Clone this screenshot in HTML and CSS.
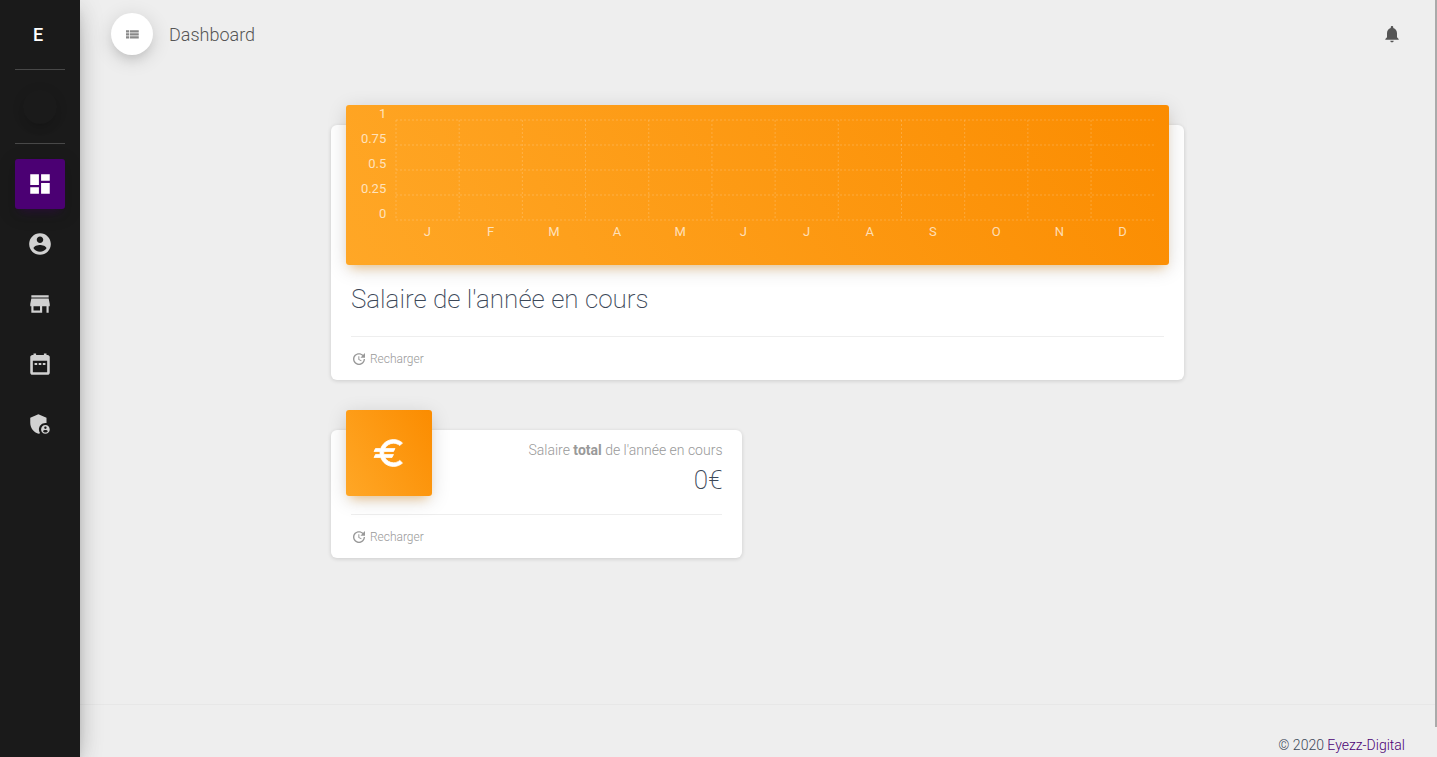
FILE: index.html
```html
<!DOCTYPE html>
<html lang="fr">
<head>
    <meta charset="UTF-8">
    <title>Dashboard</title>
    <link rel="stylesheet" href="styles.css">
</head>
<body>
    <div class="wrapper">
        <aside class="sidebar">
            <a class="logo" href="#">E</a>
            <div class="user"><div class="photo"></div></div>
            <nav class="menu">
                <a class="active" href="#" aria-label="Dashboard">
                    <svg viewBox="0 0 24 24"><path d="M3 13h8V3H3v10zm0 8h8v-6H3v6zm10 0h8V11h-8v10zm0-18v6h8V3h-8z"/></svg>
                </a>
                <a href="#" aria-label="Profil">
                    <svg viewBox="0 0 24 24"><path d="M12 2C6.48 2 2 6.48 2 12s4.48 10 10 10 10-4.48 10-10S17.52 2 12 2zm0 3c1.66 0 3 1.34 3 3s-1.34 3-3 3-3-1.34-3-3 1.34-3 3-3zm0 14.2c-2.5 0-4.71-1.28-6-3.22.03-1.99 4-3.08 6-3.08 1.99 0 5.97 1.09 6 3.08-1.29 1.94-3.5 3.22-6 3.22z"/></svg>
                </a>
                <a href="#" aria-label="Magasins">
                    <svg viewBox="0 0 24 24"><path d="M20 4H4v2h16V4zm1 10v-2l-1-5H4l-1 5v2h1v6h10v-6h4v6h2v-6h1zm-9 4H6v-4h6v4z"/></svg>
                </a>
                <a href="#" aria-label="Calendrier">
                    <svg viewBox="0 0 24 24"><path d="M9.4 11H7v2h2.4v-2zm3.8 0h-2.4v2h2.4v-2zm3.8 0h-2.4v2H17v-2zm2-7.4h-1V2.2h-2.4v1.4H8.4V2.2H6v1.4H5c-1.1 0-2 .9-2 2V20c0 1.1.9 2 2 2h14c1.1 0 2-.9 2-2V5.600c0-1.100-.9-2-2-2zm-.4 16H5.400V9h13.200v10.600z"/></svg>
                </a>
                <a href="#" aria-label="Administration">
                    <svg viewBox="0 0 24 24"><path d="M17 11c.34 0 .67.04 1 .09V6.27L10.5 3 3 6.27v4.91c0 4.54 3.2 8.79 7.5 9.82.55-.13 1.08-.32 1.6-.55-.69-.98-1.1-2.17-1.1-3.45 0-3.31 2.69-6 6-6z"/><path d="M17 13c-2.21 0-4 1.79-4 4s1.79 4 4 4 4-1.79 4-4-1.79-4-4-4zm0 1.38c.62 0 1.12.51 1.12 1.12s-.51 1.12-1.12 1.12-1.12-.51-1.12-1.12.5-1.12 1.12-1.12zm0 5.37c-.93 0-1.74-.46-2.24-1.17.05-.72 1.51-1.08 2.24-1.08s2.19.36 2.24 1.08c-.5.71-1.31 1.17-2.24 1.17z"/></svg>
                </a>
            </nav>
        </aside>

        <div class="main-panel">
            <header class="navbar">
                <button class="minimize" type="button" aria-label="Menu">
                    <svg viewBox="0 0 24 24"><path d="M4 14h4v-3H4v3zm0 4h4v-3H4v3zM4 10h4V7H4v3zm5 4h12v-3H9v3zm0 4h12v-3H9v3zM9 7v3h12V7H9z"/></svg>
                </button>
                <a class="brand" href="#">Dashboard</a>
                <button class="bell" type="button" aria-label="Notifications">
                    <svg viewBox="0 0 24 24"><path d="M12 22c1.1 0 2-.9 2-2h-4c0 1.1.89 2 2 2zm6-6v-5c0-3.07-1.64-5.64-4.5-6.32V4c0-.83-.67-1.5-1.5-1.5s-1.5.67-1.5 1.5v.68C7.63 5.36 6 7.92 6 11v5l-2 2v1h16v-1l-2-2z"/></svg>
                </button>
            </header>

            <main class="content">
                <div class="cards">
                    <section class="card card-wide">
                        <div class="chart">
                            <div class="chart-y">
                                <span>1</span><span>0.75</span><span>0.5</span><span>0.25</span><span>0</span>
                            </div>
                            <div class="chart-plot">
                                <svg class="chart-grid">
                                    <line x1="0" y1="0" x2="100%" y2="0"/>
                                    <line x1="0" y1="25%" x2="100%" y2="25%"/>
                                    <line x1="0" y1="50%" x2="100%" y2="50%"/>
                                    <line x1="0" y1="75%" x2="100%" y2="75%"/>
                                    <line x1="0" y1="100%" x2="100%" y2="100%"/>
                                    <line x1="0" y1="0" x2="0" y2="100%"/>
                                    <line x1="8.333%" y1="0" x2="8.333%" y2="100%"/>
                                    <line x1="16.667%" y1="0" x2="16.667%" y2="100%"/>
                                    <line x1="25%" y1="0" x2="25%" y2="100%"/>
                                    <line x1="33.333%" y1="0" x2="33.333%" y2="100%"/>
                                    <line x1="41.667%" y1="0" x2="41.667%" y2="100%"/>
                                    <line x1="50%" y1="0" x2="50%" y2="100%"/>
                                    <line x1="58.333%" y1="0" x2="58.333%" y2="100%"/>
                                    <line x1="66.667%" y1="0" x2="66.667%" y2="100%"/>
                                    <line x1="75%" y1="0" x2="75%" y2="100%"/>
                                    <line x1="83.333%" y1="0" x2="83.333%" y2="100%"/>
                                    <line x1="91.667%" y1="0" x2="91.667%" y2="100%"/>
                                </svg>
                                <div class="chart-x">
                                    <span>J</span><span>F</span><span>M</span><span>A</span><span>M</span><span>J</span>
                                    <span>J</span><span>A</span><span>S</span><span>O</span><span>N</span><span>D</span>
                                </div>
                            </div>
                        </div>
                        <h3 class="card-title">Salaire de l'année en cours</h3>
                        <div class="card-footer">
                            <a href="#">
                                <svg viewBox="0 0 24 24"><path d="M21 10.12h-6.78l2.74-2.82c-2.73-2.7-7.15-2.8-9.88-.1-2.73 2.71-2.73 7.08 0 9.79s7.15 2.71 9.88 0C18.32 15.65 19 14.08 19 12.1h2c0 1.98-.88 4.55-2.64 6.29-3.51 3.48-9.21 3.48-12.72 0-3.5-3.47-3.53-9.11-.02-12.58s9.14-3.47 12.65 0L21 3v7.12zM12.5 8v4.25l3.5 2.08-.72 1.21L11 13V8h1.5z"/></svg>
                                Recharger
                            </a>
                        </div>
                    </section>

                    <section class="card">
                        <div class="stats">
                            <div class="card-icon">
                                <svg viewBox="0 0 24 24"><path d="M15 18.5c-2.51 0-4.68-1.42-5.76-3.5H14l1-2H8.58c-.05-.33-.08-.66-.08-1s.03-.67.08-1H15l1-2H9.24C10.32 6.92 12.5 5.5 15 5.5c1.61 0 3.09.59 4.23 1.57L21 5.3C19.41 3.87 17.3 3 15 3c-3.92 0-7.24 2.51-8.48 6H3l-1 2h4.06c-.04.33-.06.66-.06 1s.02.67.06 1H3l-1 2h4.52c1.24 3.49 4.56 6 8.48 6 2.31 0 4.41-.87 6-2.3l-1.78-1.77c-1.13.98-2.6 1.57-4.22 1.57z"/></svg>
                            </div>
                            <div class="stats-text">
                                <p class="card-category">Salaire <b>total</b> de l'année en cours</p>
                                <h3 class="stats-value">0€</h3>
                            </div>
                        </div>
                        <div class="card-footer">
                            <a href="#">
                                <svg viewBox="0 0 24 24"><path d="M21 10.12h-6.78l2.74-2.82c-2.73-2.7-7.15-2.8-9.88-.1-2.73 2.71-2.73 7.08 0 9.79s7.15 2.71 9.88 0C18.32 15.65 19 14.08 19 12.1h2c0 1.98-.88 4.55-2.64 6.29-3.51 3.48-9.21 3.48-12.72 0-3.5-3.47-3.53-9.11-.02-12.58s9.14-3.47 12.65 0L21 3v7.12zM12.5 8v4.25l3.5 2.08-.72 1.21L11 13V8h1.5z"/></svg>
                                Recharger
                            </a>
                        </div>
                    </section>
                </div>
            </main>

            <footer class="footer">
                © 2020 <a href="#">Eyezz-Digital</a>
            </footer>
        </div>
        <div class="scroll-thumb"></div>
    </div>
</body>
</html>
```
FILE: styles.css
```css
* {
    box-sizing: border-box;
}
body {
    margin: 0;
    background-color: #eee;
    color: #3c4858;
    font-family: Roboto, "Liberation Sans", sans-serif;
    font-size: 14px;
    font-weight: 300;
    line-height: 20px;
}
a {
    color: inherit;
    text-decoration: none;
}
button {
    padding: 0;
    border: none;
    background: none;
    cursor: pointer;
}
svg {
    display: block;
    fill: currentColor;
}
.wrapper {
    position: relative;
    display: flex;
    height: 100vh;
    overflow: hidden;
}

/* sidebar */
.sidebar {
    z-index: 1;
    flex: 0 0 80px;
    padding: 0 15px;
    background-color: #1a1a1a;
    box-shadow: 0 10px 30px -12px rgba(0, 0, 0, 0.42), 0 4px 25px 0 rgba(0, 0, 0, 0.12), 0 8px 10px -5px rgba(0, 0, 0, 0.2);
    color: #fff;
}
.logo {
    display: block;
    height: 70px;
    padding-right: 4px;
    border-bottom: 1px solid #484848;
    font-size: 18px;
    font-weight: 500;
    line-height: 70px;
    text-align: center;
}
.user {
    display: flex;
    align-items: center;
    justify-content: center;
    height: 74px;
    border-bottom: 1px solid #484848;
}
.photo {
    width: 34px;
    height: 34px;
    border-radius: 50%;
    box-shadow: 0 6px 10px -4px rgba(0, 0, 0, 0.2), 0 2px 14px 0 rgba(0, 0, 0, 0.08);
}
.menu {
    display: grid;
    gap: 10px;
    margin-top: 15px;
}
.menu a {
    display: flex;
    align-items: center;
    justify-content: center;
    height: 50px;
    border-radius: 3px;
    color: #d1d1d1;
}
.menu a.active {
    background-color: #4b0073;
    box-shadow: 0 4px 20px 0 rgba(0, 0, 0, 0.14), 0 7px 10px -5px rgba(75, 0, 115, 0.4);
    color: #fff;
}
.menu svg {
    width: 26px;
    height: 26px;
}

/* main panel */
.main-panel {
    flex: 1;
    margin-right: 2px;
    overflow-y: auto;
    scrollbar-width: none;
}
.scroll-thumb {
    position: absolute;
    top: 0;
    right: 0;
    width: 2px;
    height: 96%;
    background-color: #aaa;
}
.navbar {
    display: flex;
    align-items: center;
    height: 70px;
    padding: 0 32px 2px 31px;
    color: #555;
}
.minimize {
    display: flex;
    align-items: center;
    justify-content: center;
    width: 42px;
    height: 42px;
    border-radius: 50%;
    background-color: #fff;
    box-shadow: 0 4px 20px 0 rgba(0, 0, 0, 0.14), 0 7px 12px -5px rgba(0, 0, 0, 0.14);
    color: #888;
}
.minimize svg {
    width: 18px;
    height: 18px;
}
.brand {
    margin-left: 16px;
    padding-top: 2px;
    font-size: 18px;
}
.bell {
    margin-left: auto;
    color: #555;
}
.bell svg {
    width: 22px;
    height: 20px;
}
.content {
    min-height: calc(100vh - 123px);
    padding: 55px 15px 30px;
}
.cards {
    display: grid;
    grid-template-columns: 1fr 1fr;
    gap: 50px 30px;
    width: 66.66%;
    margin: 0 auto;
    padding: 0 15px;
}
.card {
    border-radius: 6px;
    background-color: #fff;
    box-shadow: 0 1px 4px 0 rgba(0, 0, 0, 0.14);
}
.card-wide {
    grid-column: 1 / -1;
}
.card-title {
    margin: 0;
    padding: 16px 20px 19px;
    font-size: 26px;
    font-weight: 200;
    line-height: 36px;
}
.card-footer {
    margin: 0 20px;
    padding: 12px 0 11px;
    border-top: 1px solid #eee;
    color: #999;
    font-size: 12px;
}
.card-footer a {
    display: inline-flex;
    align-items: center;
    gap: 3px;
    vertical-align: top;
}
.card-footer svg {
    width: 16px;
    height: 16px;
}

/* chart */
.chart,
.card-icon {
    margin: -20px 15px 0;
    border-radius: 3px;
    background: linear-gradient(60deg, #ffa726, #fb8c00);
    box-shadow: 0 4px 20px 0 rgba(0, 0, 0, 0.14), 0 7px 10px -5px rgba(255, 152, 0, 0.4);
}
.chart {
    display: flex;
    gap: 10px;
    height: 160px;
    padding: 0 15px;
    color: rgba(255, 255, 255, 0.7);
    font-size: 13px;
    font-weight: 400;
}
.chart-y {
    display: grid;
    grid-auto-rows: 25px;
    width: 25px;
    line-height: 18px;
    text-align: right;
}
.chart-plot {
    flex: 1;
    padding-top: 15px;
}
.chart-grid {
    width: 100%;
    height: 100px;
    overflow: visible;
    stroke: rgba(255, 255, 255, 0.2);
    stroke-dasharray: 2px;
}
.chart-x {
    display: grid;
    grid-template-columns: repeat(12, 1fr);
    margin-top: 2px;
    text-align: center;
}

/* stats card */
.stats {
    display: flex;
    justify-content: space-between;
    height: 84px;
    padding-right: 20px;
}
.card-icon {
    display: flex;
    align-items: center;
    justify-content: center;
    width: 86px;
    height: 86px;
    color: #fff;
}
.card-icon svg {
    width: 36px;
    height: 36px;
    stroke: currentColor;
    stroke-width: 0.5;
}
.stats-text {
    padding-top: 10px;
    text-align: right;
}
.card-category {
    margin: 0;
    color: #999;
}
.card-category b {
    font-weight: 700;
}
.stats-value {
    margin: 0;
    font-size: 26px;
    font-weight: 200;
    line-height: 40px;
}

.footer {
    padding: 30px;
    border-top: 1px solid #e7e7e7;
    text-align: right;
}
.footer a {
    color: #4b0073;
}
```
